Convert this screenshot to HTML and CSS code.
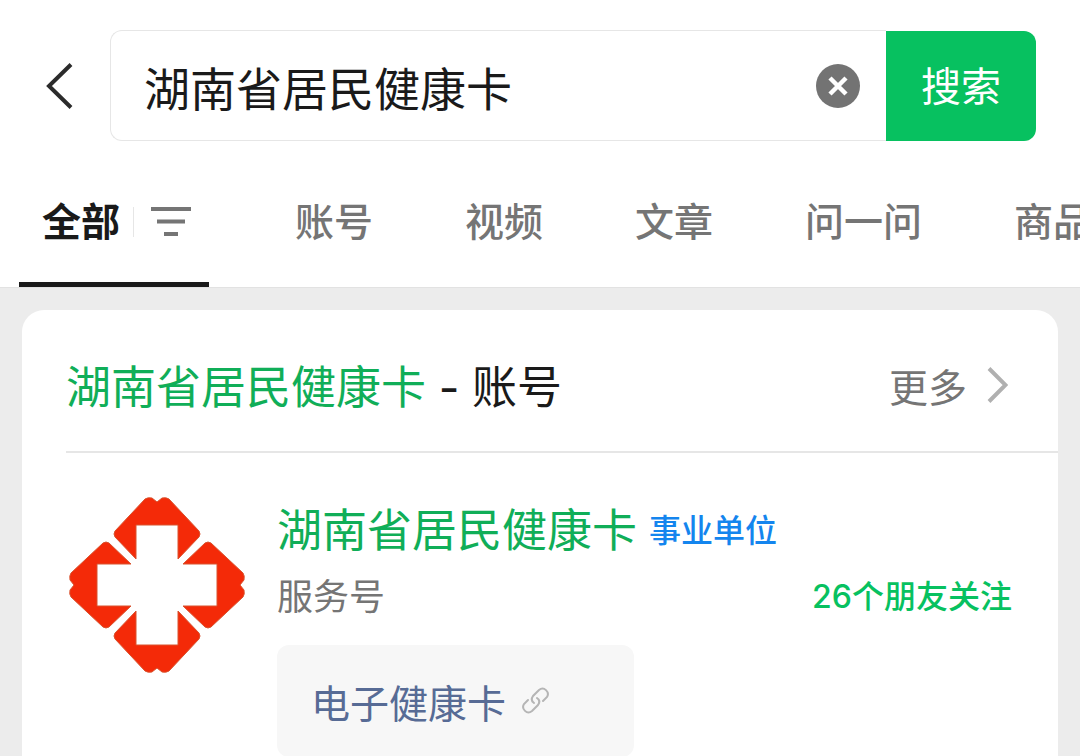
FILE: index.html
```
<!DOCTYPE html>
<html lang="zh-CN">
<head>
  <meta charset="UTF-8">
  <title>湖南省居民健康卡 - 搜索</title>
  <meta name="viewport" content="width=device-width, initial-scale=1.0">
  <link rel="stylesheet" href="styles.css">
</head>
<body>
  <header class="header">
    <form class="search" role="search">
      <button type="button" class="back" aria-label="返回">
        <svg width="28" height="46" viewBox="0 0 28 46" fill="none" stroke="#2b2b2b" stroke-width="4"><path d="M25 1.500 3 23l22 21.500"/></svg>
      </button>
      <div class="search-box">
        <input class="search-input" type="text" value="湖南省居民健康卡" aria-label="搜索内容">
        <button type="button" class="clear" aria-label="清除">
          <svg width="44" height="44" viewBox="0 0 44 44"><circle cx="22" cy="22" r="22" fill="#737373"/><path d="m14 14 16 16M30 14 14 30" stroke="#fff" stroke-width="4.5"/></svg>
        </button>
      </div>
      <button type="submit" class="search-btn">搜索</button>
    </form>

    <nav class="tabs">
      <div class="tab-all">
        <a class="tab-link" href="#all">全部</a>
        <button type="button" class="filter" aria-label="筛选">
          <svg width="40" height="30" viewBox="0 0 40 30" fill="#757575"><path d="M0 0h40v4H0zM6 12.500h28v4H6zM13 25h14v4H13z"/></svg>
        </button>
      </div>
      <a class="tab" href="#accounts">账号</a>
      <a class="tab" href="#videos">视频</a>
      <a class="tab" href="#articles">文章</a>
      <a class="tab" href="#ask">问一问</a>
      <a class="tab" href="#goods">商品</a>
    </nav>
  </header>

  <main class="results">
    <section class="card">
      <div class="card-head">
        <h2 class="card-title"><span class="match">湖南省居民健康卡</span> - 账号</h2>
        <a class="more" href="#more">更多
          <svg width="21" height="36" viewBox="0 0 21 36" fill="none" stroke="#b0b0b0" stroke-width="4"><path d="m2 1.500 16.500 16.500L2 34.500"/></svg>
        </a>
      </div>

      <article class="account">
        <svg class="avatar" viewBox="0 0 176 176" role="img" aria-label="湖南省居民健康卡">
          <g fill="#f42a08" stroke="#d9532f" stroke-width="1" stroke-linejoin="round">
            <path id="petal" d="M76 2 46 34q-2 3 0 6l21 22V28h42v34l21-22q2-3 0-6L100 2q-3-2-7-1l-5 4-5-4q-4-1-7 1z"/>
            <use href="#petal" transform="rotate(90 88 88)"/>
            <use href="#petal" transform="rotate(180 88 88)"/>
            <use href="#petal" transform="rotate(270 88 88)"/>
          </g>
        </svg>
        <div class="info">
          <div class="name-row">
            <a class="name" href="#account">湖南省居民健康卡</a>
            <span class="badge">事业单位</span>
          </div>
          <div class="meta">
            <span class="type">服务号</span>
            <span class="friends">26个朋友关注</span>
          </div>
          <div class="links">
            <a class="chip" href="#ehealth">电子健康卡
              <svg width="28" height="28" viewBox="0 0 28 28" fill="none" stroke="#b5b5b5" stroke-width="2" stroke-linecap="round"><path d="M12 16c-3-2-3-4-1-7l6-6c5-4 11 2 8 7l-4 4"/><path d="M15 11c3 2 3 4 1 7l-6 6c-5 4-11-2-8-7l4-4"/></svg>
            </a>
          </div>
        </div>
      </article>
    </section>
  </main>
</body>
</html>
```
FILE: styles.css
```
:root {
  --green: #07c160;
  --match: #10ae58;
  --text: #1a1a1a;
  --muted: #757575;
  --line: #e6e6e6;
  --page: #ececec;
}

* {
  box-sizing: border-box;
}

body {
  margin: 0;
  min-height: 100vh;
  display: flex;
  flex-direction: column;
  background: var(--page);
  color: var(--text);
  font-family: Inter, "Noto Sans CJK SC", sans-serif;
}

a {
  color: inherit;
  text-decoration: none;
}

button {
  padding: 0;
  border: none;
  background: none;
  font-family: inherit;
  cursor: pointer;
}

svg {
  display: block;
  flex-shrink: 0;
}

.header {
  background: #fff;
  border-bottom: 1px solid #e2e2e2;
}

/* search bar */
.search {
  display: flex;
  align-items: center;
  padding: 30px 44px 0 46px;
}

.back {
  margin-right: 36px;
}

.search-box {
  flex: 1;
  min-width: 0;
  display: flex;
  align-items: center;
  height: 111px;
  padding: 0 26px 0 33px;
  border: 1px solid var(--line);
  border-right: none;
  border-radius: 12px 0 0 12px;
}

.search-input {
  flex: 1;
  min-width: 0;
  padding: 0;
  border: none;
  outline: none;
  color: var(--text);
  font-family: inherit;
  font-size: 46px;
}

.search-btn {
  flex-shrink: 0;
  width: 150px;
  height: 110px;
  padding-bottom: 4px;
  border-radius: 0 12px 12px 0;
  background: var(--green);
  color: #fff;
  font-size: 40px;
}

/* tabs */
.tabs {
  display: flex;
  height: 146px;
  padding-left: 19px;
  overflow: hidden;
  font-size: 39px;
  font-weight: 500;
  line-height: 58px;
  white-space: nowrap;
}

.tab-all {
  display: flex;
  align-items: center;
  flex-shrink: 0;
  width: 190px;
  margin-right: 40px;
  padding: 20px 18px 0 23px;
  border-bottom: 5px solid var(--text);
  font-weight: 700;
}

.filter {
  margin-left: auto;
  padding-left: 17px;
  border-left: 1px solid var(--line);
}

.tab {
  flex-shrink: 0;
  padding: 52px 46px 0;
  color: var(--muted);
}

/* results */
.results {
  flex: 1;
  display: flex;
  padding: 22px 22px 0;
}

.card {
  flex: 1;
  padding-left: 44px;
  border-radius: 22px 22px 0 0;
  background: #fff;
}

.card-head {
  display: flex;
  align-items: center;
  justify-content: space-between;
  height: 143px;
  padding: 8px 50px 0 0;
  border-bottom: 2px solid var(--line);
}

.card-title {
  margin: 0;
  font-size: 45px;
  font-weight: 400;
}

.match,
.name {
  color: var(--match);
}

.more {
  display: flex;
  align-items: center;
  gap: 20px;
  color: var(--muted);
  font-size: 39px;
}

.account {
  display: flex;
  gap: 32px;
  padding: 44px 46px 22px 3px;
}

.avatar {
  width: 176px;
  height: 176px;
}

.info {
  flex: 1;
}

.name-row {
  display: flex;
  align-items: center;
  gap: 12px;
  line-height: 68px;
}

.name {
  font-size: 45px;
}

.badge {
  color: #1485ee;
  font-size: 32px;
  font-weight: 500;
}

.meta {
  display: flex;
  align-items: center;
  justify-content: space-between;
  margin-bottom: 16px;
  line-height: 64px;
}

.type {
  color: var(--muted);
  font-size: 36px;
}

.friends {
  color: var(--green);
  font-size: 32px;
  font-weight: 500;
}

.links {
  display: grid;
  grid-template-columns: 1fr 1fr;
  gap: 22px;
}

.chip {
  display: flex;
  align-items: center;
  gap: 16px;
  height: 112px;
  padding: 0 34px;
  border-radius: 12px;
  background: #f7f7f7;
  color: #576b95;
  font-size: 39px;
}
```
